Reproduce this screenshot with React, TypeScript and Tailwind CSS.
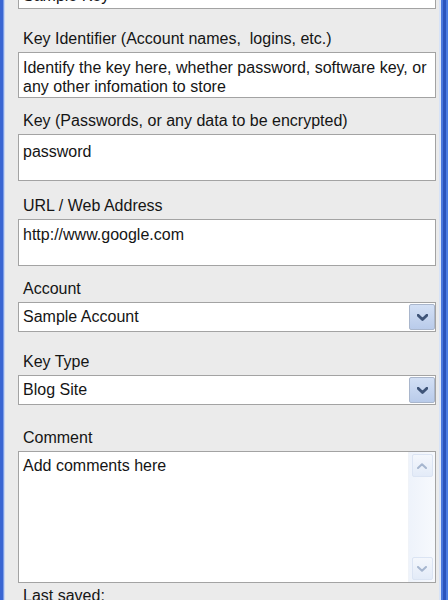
import React from "react";

const Chevron = ({ color, up = false, w = 10, h = 6, sw = 2.4 }: { color: string; up?: boolean; w?: number; h?: number; sw?: number }) => (
  <svg width={w} height={h} viewBox="0 0 10 6" className="block">
    <path
      d={up ? "M1 5 L5 1.2 L9 5" : "M1 1 L5 4.8 L9 1"}
      fill="none"
      stroke={color}
      strokeWidth={sw}
      strokeLinecap="round"
      strokeLinejoin="round"
    />
  </svg>
);

const Label = ({ text, mt }: { text: string; mt: string }) => (
  <div className={`${mt} h-[18px] leading-[18px] mb-[4px] pl-[5px] whitespace-pre text-[#151515] shrink-0`}>{text}</div>
);

const Select = ({ value }: { value: string }) => (
  <div className="h-[30px] shrink-0 border border-[#a3a3a3] bg-white flex items-stretch">
    <div className="flex-1 pl-[4px] flex items-center text-[#151515]">{value}</div>
    <div className="w-[26px] my-[1px] border border-[#a9b6cc] rounded-[2px] bg-gradient-to-b from-[#d3e0f5] to-[#b9cbea] flex items-center justify-center">
      <Chevron color="#3e5478" w={11} h={7} sw={2.6} />
    </div>
  </div>
);

export default function App() {
  return (
    <div
      className="w-[448px] h-[600px] overflow-hidden flex bg-[#ebebeb] text-[16px]"
      style={{ fontFamily: '"Liberation Sans", Arial, sans-serif' }}
    >
      <div className="flex shrink-0">
        <div className="w-[3px] bg-[#3a66d2]" />
        <div className="w-[1px] bg-[#7c9de6]" />
        <div className="w-[1px] bg-[#c9d6f1]" />
      </div>

      <div className="flex-1 flex flex-col pl-[13px] pr-[3px]">
        <div className="h-[30px] mt-[-21px] border border-[#a3a3a3] bg-white pl-[4px] pt-[6px] leading-[19px] text-[#151515] shrink-0">
          Sample Key
        </div>

        <Label text="Key Identifier (Account names,  logins, etc.)" mt="mt-[21px]" />
        <div className="h-[46px] border border-[#a3a3a3] bg-white pl-[4px] pt-[5px] leading-[19px] text-[#151515] shrink-0">
          Identify the key here, whether password, software key, or
          <br />
          any other infomation to store
        </div>

        <Label text="Key (Passwords, or any data to be encrypted)" mt="mt-[14px]" />
        <div className="h-[47px] border border-[#a3a3a3] bg-white pl-[4px] pt-[7px] leading-[19px] text-[#151515] shrink-0">
          password
        </div>

        <Label text="URL / Web Address" mt="mt-[16px]" />
        <div className="h-[47px] border border-[#a3a3a3] bg-white pl-[4px] pt-[5px] leading-[19px] text-[#151515] shrink-0">
          http://www.google.com
        </div>

        <Label text="Account" mt="mt-[14px]" />
        <Select value="Sample Account" />

        <Label text="Key Type" mt="mt-[21px]" />
        <Select value="Blog Site" />

        <Label text="Comment" mt="mt-[24px]" />
        <div className="h-[132px] border border-[#a3a3a3] bg-white flex shrink-0">
          <div className="flex-1 pl-[4px] pt-[4px] leading-[19px] text-[#151515]">Add comments here</div>
          <div className="w-[27px] bg-gradient-to-r from-[#eef3fb] to-[#f7f9fd] flex flex-col items-center justify-between py-[2px] px-[3px] border-l border-[#f0f3f8]">
            <div className="w-[21px] h-[23px] rounded-[2px] border border-[#dbe4f3] bg-gradient-to-b from-[#f4f7fc] to-[#e3ebf8] flex items-center justify-center">
              <Chevron color="#a6b6cf" up w={10} h={6} sw={2} />
            </div>
            <div className="w-[21px] h-[23px] rounded-[2px] border border-[#dbe4f3] bg-gradient-to-b from-[#f4f7fc] to-[#e3ebf8] flex items-center justify-center">
              <Chevron color="#a6b6cf" w={10} h={6} sw={2} />
            </div>
          </div>
        </div>

        <Label text="Last saved:" mt="mt-[4px]" />
      </div>

      <div className="flex shrink-0">
        <div className="w-[2px] bg-[#d7e2f6]" />
        <div className="w-[2px] bg-[#4a78dc]" />
        <div className="w-[3px] bg-[#2a54bd]" />
        <div className="w-[2px] bg-[#4b7de2]" />
      </div>
    </div>
  );
}
